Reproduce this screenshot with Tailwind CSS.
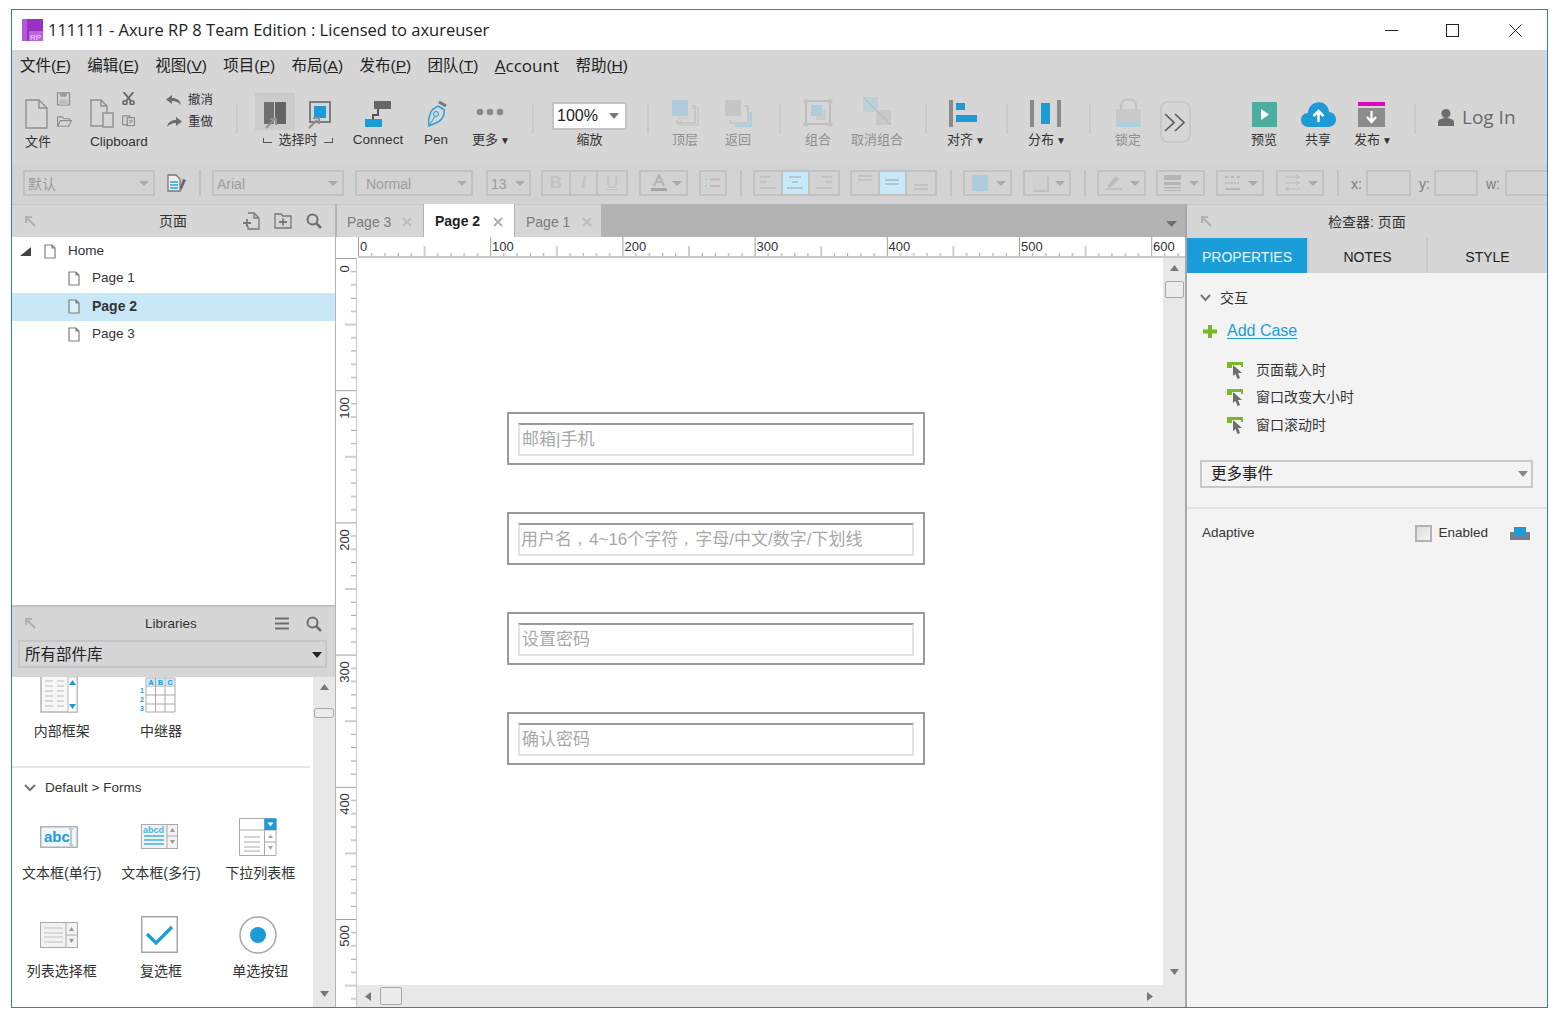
<!DOCTYPE html>
<html lang="en">
<head>
    <meta charset="UTF-8">
    <title>111111 - Axure RP 8 Team Edition</title>
    <script src="https://cdn.jsdelivr.net/npm/@tailwindcss/browser@4"></script>
</head>
<body class="bg-white overflow-hidden font-['Liberation_Sans','Noto_Sans_CJK_SC',sans-serif] text-[#333]">
<div class="ml-[11px] mt-[9px] w-[1537px] h-[999px] border border-[#2b7cd3] flex flex-col">

    <!-- title bar -->
    <div class="h-[40px] flex items-center bg-white shrink-0">
        <svg class="ml-[10px]" width="21" height="22" viewBox="0 0 21 22"><rect width="21" height="22" fill="#9b30c4"/><rect x="0" y="0" width="5" height="22" fill="#b45ad6"/><rect x="7" y="12" width="14" height="10" fill="#b866d8"/><text x="8" y="20.5" font-size="8" fill="#f0d8f8" font-family="Liberation Sans">RP</text></svg>
        <span class="ml-[5px] font-['Open_Sans',sans-serif] text-[16.5px] text-[#222] whitespace-nowrap">111111 - Axure RP 8 Team Edition : Licensed to axureuser</span>
        <div class="ml-auto flex items-center">
            <svg width="13" height="13" viewBox="0 0 13 13"><path d="M0 6.5H13" stroke="#222" stroke-width="1"/></svg>
            <svg class="ml-[48px]" width="14" height="13" viewBox="0 0 14 13"><rect x="0.5" y="0.5" width="12" height="12" fill="none" stroke="#222"/></svg>
            <svg class="ml-[49px] mr-[25px]" width="13" height="13" viewBox="0 0 13 13"><path d="M0.5 0.5L12.5 12.5M12.5 0.5L0.5 12.5" stroke="#222"/></svg>
        </div>
    </div>

    <!-- menu -->
    <div class="h-[32px] bg-[#d6d6d6] flex items-center pl-[8px] pb-px gap-[16.4px] text-[15.5px] text-[#222] shrink-0">
        <span>文件(<u>F</u>)</span><span>编辑(<u>E</u>)</span><span>视图(<u>V</u>)</span><span>项目(<u>P</u>)</span><span>布局(<u>A</u>)</span><span>发布(<u>P</u>)</span><span>团队(<u>T</u>)</span><span class="font-['Open_Sans',sans-serif] text-[17px]"><u>A</u>ccount</span><span>帮助(<u>H</u>)</span>
    </div>

    <!-- toolbar -->
    <div class="h-[82px] bg-[#d6d6d6] flex pt-[8px] text-[13px] text-[#333] shrink-0">
        <div class="ml-[13px] w-[50px] flex flex-col">
            <div class="h-[37px] flex">
                <svg class="mt-[9px]" width="23" height="30" viewBox="0 0 23 30"><path d="M1 1H14L22 9V29H1ZM14 1V9H22" fill="none" stroke="#8f8f8f" stroke-width="1.4"/></svg>
                <div class="ml-[8px] flex flex-col gap-[10px]">
                    <svg class="mt-[2px]" width="15" height="15" viewBox="0 0 15 15"><path d="M1 1H14V14H1Z" fill="none" stroke="#8c8c8c" stroke-width="1.3"/><rect x="4" y="1" width="7" height="4" fill="#9a9a9a"/><rect x="3" y="8" width="9" height="6" fill="#bdbdbd"/></svg>
                    <svg width="17" height="12" viewBox="0 0 17 12"><path d="M1 11V1H6L8 3H14V5M1 11L4 5H16L13 11Z" fill="none" stroke="#8c8c8c" stroke-width="1.2"/></svg>
                </div>
            </div>
            <span class="mt-[7px] h-4 leading-4">文件</span>
        </div>
        <div class="ml-[15px] w-[60px] flex flex-col">
            <div class="h-[37px] flex">
                <svg class="mt-[9px]" width="24" height="30" viewBox="0 0 24 30"><path d="M13 27H1V1H11L17 7V14M11 1V7H17" fill="none" stroke="#8f8f8f" stroke-width="1.4"/><rect x="13" y="14" width="10" height="14" fill="none" stroke="#8f8f8f" stroke-width="1.4"/></svg>
                <div class="ml-[7px] flex flex-col gap-[10px]">
                    <svg class="mt-[2px]" width="15" height="15" viewBox="0 0 15 15"><path d="M2 0L10 10M13 0L5 10" stroke="#666" stroke-width="2"/><circle cx="3.5" cy="12" r="2.2" fill="none" stroke="#666" stroke-width="1.8"/><circle cx="11.5" cy="12" r="2.2" fill="none" stroke="#666" stroke-width="1.8"/></svg>
                    <svg width="16" height="13" viewBox="0 0 16 13"><rect x="1" y="1" width="8" height="10" fill="none" stroke="#777"/><rect x="6" y="3" width="8" height="9" fill="#d6d6d6" stroke="#777"/><path d="M8 6H12M8 8H12" stroke="#888"/></svg>
                </div>
            </div>
            <span class="mt-[7px] h-4 leading-4 text-[13.5px]">Clipboard</span>
        </div>
        <div class="ml-[16px] w-[50px] flex flex-col gap-[6px] text-[12.5px] pt-[2px]">
            <div class="flex items-center h-[16px]"><svg width="16" height="12" viewBox="0 0 16 12"><path d="M6 1L0 5.5L6 10V7C10 7 12 8 15 11C14 6 11 4 6 4Z" fill="#6d6d6d"/></svg><span class="ml-[6px] whitespace-nowrap">撤消</span></div>
            <div class="flex items-center h-[16px]"><svg width="16" height="12" viewBox="0 0 16 12"><path d="M10 1L16 5.5L10 10V7C6 7 4 8 1 11C2 6 5 4 10 4Z" fill="#6d6d6d"/></svg><span class="ml-[6px] whitespace-nowrap">重做</span></div>
        </div>
        <div class="ml-[20px] mt-[14px] w-[2px] h-[30px] bg-[#cacaca]"></div>

        <div class="ml-[17px] w-[86px] flex flex-col items-center">
            <div class="h-[37px] mt-[3px] w-full flex items-start">
                <div class="w-[40px] h-[37px] bg-[#cbcbcb] flex items-start justify-center pt-[8px]">
                    <svg width="23" height="28" viewBox="0 0 23 28"><rect x="0" y="1" width="10" height="22" fill="#6f6f6f"/><rect x="11" y="1" width="11" height="22" fill="#646464"/><path d="M2 27L10 19M6 18H12V24" fill="none" stroke="#8f8f8f" stroke-width="2"/></svg>
                </div>
                <svg class="ml-[13px] mt-[8px]" width="24" height="28" viewBox="0 0 24 28"><rect x="2" y="1" width="20" height="20" fill="none" stroke="#7d7d7d" stroke-width="2"/><rect x="6" y="5" width="12" height="12" fill="#1d9bd7"/><path d="M1 27L9 19M5 17H11V23" fill="none" stroke="#8f8f8f" stroke-width="2"/></svg>
            </div>
            <span class="mt-[2px] h-4 leading-4 whitespace-nowrap flex items-center text-[13px]"><i class="w-[9px] h-[5px] border-l border-b border-[#555] mr-[6px]"></i>选择时<i class="w-[9px] h-[5px] border-r border-b border-[#555] ml-[6px]"></i></span>
        </div>
        <div class="ml-[7px] w-[60px] flex flex-col items-center">
            <div class="h-[37px] flex items-end">
                <svg width="27" height="26" viewBox="0 0 27 26"><rect x="9" y="0" width="17" height="8" fill="#666"/><path d="M13 8V14H8V18" fill="none" stroke="#555" stroke-width="2"/><rect x="0" y="18" width="17" height="8" fill="#1d9bd7"/></svg>
            </div>
            <span class="mt-[5px] h-4 leading-4 text-[13.5px]">Connect</span>
        </div>
        <div class="ml-[12px] w-[32px] flex flex-col items-center">
            <div class="h-[37px] flex items-end">
                <svg width="23" height="27" viewBox="0 0 23 27"><path d="M14 2L21 6" stroke="#777" stroke-width="3"/><path d="M13 6L19 9.5C20 15 17 20 13 22L4 26C3 21 4 13 8 9Z" fill="none" stroke="#2aa0d8" stroke-width="1.5"/><path d="M4 26L10 16" stroke="#2aa0d8"/><circle cx="11" cy="14" r="2.5" fill="none" stroke="#2aa0d8"/></svg>
            </div>
            <span class="mt-[5px] h-4 leading-4 text-[13.5px]">Pen</span>
        </div>
        <div class="ml-[14px] w-[50px] flex flex-col items-center">
            <div class="h-[37px] flex items-center">
                <svg class="mt-[7px] -ml-[3px]" width="28" height="8" viewBox="0 0 28 8"><circle cx="4" cy="4" r="3.3" fill="#8a8a8a"/><circle cx="14" cy="4" r="3.3" fill="#8a8a8a"/><circle cx="24" cy="4" r="3.3" fill="#8a8a8a"/></svg>
            </div>
            <span class="mt-[5px] h-4 leading-4 whitespace-nowrap">更多<span class="text-[10px] ml-[2px]">▼</span></span>
        </div>
        <div class="ml-[16px] mt-[14px] w-[2px] h-[30px] bg-[#cacaca]"></div>

        <div class="ml-[18px] w-[75px] flex flex-col items-center">
            <div class="h-[42px] w-full pt-[12px]">
                <div class="h-[28px] bg-white border-2 border-[#c4c4c4] flex items-center pl-[3px] text-[16px] text-[#222]">100%<svg class="ml-auto mr-[6px]" width="10" height="6" viewBox="0 0 10 6"><path d="M0 0H10L5 6Z" fill="#777"/></svg></div>
            </div>
            <span class="h-4 leading-4">缩放</span>
        </div>
        <div class="ml-[20px] mt-[14px] w-[2px] h-[30px] bg-[#cacaca]"></div>
        <div class="text-[#8f8f8f] flex">
            <div class="ml-[16px] w-[40px] flex flex-col items-center">
                <div class="h-[37px] flex items-end"><svg width="27" height="27" viewBox="0 0 27 27"><path d="M17 18H8V25H26V8H20" fill="none" stroke="#cbcbcb" stroke-width="2"/><path d="M20 6H23V23H5V20" fill="none" stroke="#c6c6c6" stroke-width="2"/><rect x="0" y="0" width="16" height="16" fill="#aeccdc"/></svg></div>
                <span class="mt-[5px] h-4 leading-4">顶层</span>
            </div>
            <div class="ml-[13px] w-[40px] flex flex-col items-center">
                <div class="h-[37px] flex items-end"><svg width="27" height="27" viewBox="0 0 27 27"><rect x="0" y="0" width="16" height="16" fill="#c6c6c6"/><path d="M20 6H23V23H5V20" fill="none" stroke="#c6c6c6" stroke-width="2"/><path d="M26 12V26H10" fill="none" stroke="#a9cde0" stroke-width="3"/></svg></div>
                <span class="mt-[5px] h-4 leading-4">返回</span>
            </div>
        </div>
        <div class="ml-[21px] mt-[14px] w-[2px] h-[30px] bg-[#cacaca]"></div>
        <div class="text-[#8f8f8f] flex">
            <div class="ml-[17px] w-[40px] flex flex-col items-center">
                <div class="h-[37px] flex items-end"><svg width="30" height="29" viewBox="0 0 30 29"><rect x="3" y="3" width="24" height="23" fill="none" stroke="#bdbdbd" stroke-width="2"/><g fill="#c2c2c2"><circle cx="3" cy="3" r="2.6"/><circle cx="27" cy="3" r="2.6"/><circle cx="3" cy="26" r="2.6"/><circle cx="27" cy="26" r="2.6"/></g><rect x="13" y="12" width="10" height="10" fill="#cbcbcb"/><rect x="8" y="7" width="11" height="11" fill="#aeccdc"/></svg></div>
                <span class="mt-[5px] h-4 leading-4">组合</span>
            </div>
            <div class="ml-[11px] w-[56px] flex flex-col items-center">
                <div class="h-[37px] flex items-end"><svg width="30" height="30" viewBox="0 0 30 30"><rect x="1" y="0" width="15" height="15" fill="#bcd0da"/><rect x="14" y="13" width="15" height="15" fill="#c8c8c8"/><path d="M1 0L29 28" stroke="#b8b8b8"/></svg></div>
                <span class="mt-[5px] h-4 leading-4 whitespace-nowrap">取消组合</span>
            </div>
        </div>
        <div class="ml-[20px] mt-[14px] w-[2px] h-[30px] bg-[#cacaca]"></div>
        <div class="ml-[14px] w-[50px] flex flex-col items-center">
            <div class="h-[37px] flex items-end -ml-[6px]"><svg width="28" height="27" viewBox="0 0 28 27"><rect x="0" y="0" width="4" height="27" fill="#8a8a8a"/><rect x="7" y="3" width="9" height="7" fill="#1d9bd7"/><rect x="7" y="15" width="21" height="7" fill="#1d9bd7"/></svg></div>
            <span class="mt-[5px] h-4 leading-4 whitespace-nowrap">对齐<span class="text-[10px] ml-[2px]">▼</span></span>
        </div>
        <div class="ml-[15px] mt-[14px] w-[2px] h-[30px] bg-[#cacaca]"></div>
        <div class="ml-[14px] w-[50px] flex flex-col items-center">
            <div class="h-[37px] flex items-end -ml-[4px]"><svg width="31" height="27" viewBox="0 0 31 27"><rect x="0" y="0" width="4" height="27" fill="#8a8a8a"/><rect x="11" y="3" width="9" height="21" fill="#1d9bd7"/><rect x="27" y="0" width="4" height="27" fill="#8a8a8a"/></svg></div>
            <span class="mt-[5px] h-4 leading-4 whitespace-nowrap">分布<span class="text-[10px] ml-[2px]">▼</span></span>
        </div>
        <div class="ml-[17px] mt-[14px] w-[2px] h-[30px] bg-[#cacaca]"></div>
        <div class="ml-[17px] w-[40px] flex flex-col items-center text-[#8f8f8f]">
            <div class="h-[37px] flex items-end"><svg width="25" height="29" viewBox="0 0 25 29"><path d="M5 11V8C5 -1 20 -1 20 8V11" fill="none" stroke="#c4c4c4" stroke-width="2.5"/><rect x="0" y="11" width="25" height="13" fill="#c9c9c9"/><rect x="0" y="24" width="25" height="5" fill="#aecfe1"/></svg></div>
            <span class="mt-[5px] h-4 leading-4">锁定</span>
        </div>
        <div class="ml-[12px] mt-[11px] w-[31px] h-[42px] border-2 border-[#c8c8c8] rounded-[8px] flex items-center justify-center">
            <svg width="23" height="19" viewBox="0 0 23 19"><path d="M1 1L10 9.5L1 18M11 1L20 9.5L11 18" fill="none" stroke="#5c5c5c" stroke-width="1.7"/></svg>
        </div>
        <div class="ml-[53px] w-[40px] flex flex-col items-center">
            <div class="h-[37px] flex items-end"><svg width="25" height="25" viewBox="0 0 25 25"><rect width="25" height="25" fill="#4dae9f"/><path d="M9 7L17 12.5L9 18Z" fill="#fff"/></svg></div>
            <span class="mt-[5px] h-4 leading-4">预览</span>
        </div>
        <div class="ml-[14px] w-[40px] flex flex-col items-center">
            <div class="h-[37px] flex items-end"><svg width="35" height="25" viewBox="0 0 35 25"><path d="M8 25C-3 25 -2 11 7 11C8 -3 27 -3 28 10C37 10 38 25 27 25Z" fill="#1d9bd7"/><path d="M17.500 20V10M12.500 14L17.500 9L22.500 14" fill="none" stroke="#fff" stroke-width="2.500"/></svg></div>
            <span class="mt-[5px] h-4 leading-4">共享</span>
        </div>
        <div class="ml-[10px] w-[50px] flex flex-col items-center">
            <div class="h-[37px] flex items-end -ml-[3px]"><svg width="27" height="25" viewBox="0 0 27 25"><rect width="27" height="4" fill="#d905c0"/><rect y="6" width="27" height="19" fill="#8c8c8c"/><path d="M13.500 9V19M9 15L13.500 20L18 15" fill="none" stroke="#fff" stroke-width="2.200"/></svg></div>
            <span class="mt-[5px] h-4 leading-4 whitespace-nowrap">发布<span class="text-[10px] ml-[2px]">▼</span></span>
        </div>
        <div class="ml-[16px] mt-[14px] w-[2px] h-[30px] bg-[#cacaca]"></div>
        <div class="ml-[22px] flex items-center h-[54px] self-start">
            <svg width="16" height="17" viewBox="0 0 16 17"><circle cx="8" cy="4.500" r="4.500" fill="#6d6d6d"/><path d="M0 17V13C0 10 5 9 8 9C11 9 16 10 16 13V17Z" fill="#6d6d6d"/></svg>
            <span class="ml-[8px] text-[19px] text-[#6a6a6a] font-['Open_Sans',sans-serif]">Log In</span>
        </div>
    </div>

    <!-- format bar -->
    <div class="h-[40px] bg-[#d3d3d3] flex pt-[6px] text-[14px] leading-[24px] text-[#9c9c9c] shrink-0">
        <div class="ml-[11px] w-[132px] h-[26px] border-2 border-[#c2c2c2] flex items-center pl-[3px] pt-px">默认<svg class="ml-auto mr-[4px]" width="10" height="5" viewBox="0 0 10 5"><path d="M0 0H10L5 5Z" fill="#aaa"/></svg></div>
        <svg class="ml-[12px] mt-[4px]" width="20" height="18" viewBox="0 0 20 18"><path d="M1 1H9L13 5V17H1Z" fill="#eee" stroke="#777" stroke-width="1.300"/><path d="M3 8H11M3 11H11M3 14H11" stroke="#2aa0d8" stroke-width="1.500"/><path d="M14 17L19 6L16 5L13 13Z" fill="#666"/></svg>
        <div class="ml-[12px] w-[2px] h-[26px] bg-[#c2c2c2]"></div>
        <div class="ml-[11px] w-[132px] h-[26px] border-2 border-[#c2c2c2] flex items-center pl-[3px] pt-px">Arial<svg class="ml-auto mr-[4px]" width="10" height="5" viewBox="0 0 10 5"><path d="M0 0H10L5 5Z" fill="#aaa"/></svg></div>
        <div class="ml-[11px] w-[118px] h-[26px] border-2 border-[#c2c2c2] flex items-center pl-[9px] pt-px">Normal<svg class="ml-auto mr-[4px]" width="10" height="5" viewBox="0 0 10 5"><path d="M0 0H10L5 5Z" fill="#aaa"/></svg></div>
        <div class="ml-[13px] w-[45px] h-[26px] border-2 border-[#c2c2c2] flex items-center pl-[3px] pt-px">13<svg class="ml-auto mr-[4px]" width="10" height="5" viewBox="0 0 10 5"><path d="M0 0H10L5 5Z" fill="#aaa"/></svg></div>
        <div class="ml-[10px] w-[87px] h-[26px] border-2 border-[#c2c2c2] grid grid-cols-3 divide-x-2 divide-[#c2c2c2] text-center text-[17px] leading-[22px] text-[#c2c2c2]"><b>B</b><i class="font-bold">I</i><u>U</u></div>
        <div class="ml-[11px] w-[49px] h-[26px] border-2 border-[#c2c2c2] flex items-center pl-[9px]">
            <svg width="18" height="18" viewBox="0 0 18 18"><path d="M4 12L9 1L14 12M6 8H12" fill="none" stroke="#b5b5b5" stroke-width="2"/><rect x="1" y="14" width="16" height="3" fill="#a6a6a6"/></svg>
            <svg class="ml-auto mr-[4px]" width="10" height="5" viewBox="0 0 10 5"><path d="M0 0H10L5 5Z" fill="#aaa"/></svg>
        </div>
        <div class="ml-[11px] w-[28px] h-[26px] border-2 border-[#c2c2c2] flex items-center justify-center"><svg width="16" height="10" viewBox="0 0 16 10"><path d="M0 1.500H2M0 8H2" stroke="#9fcde4" stroke-width="2"/><path d="M5 1.500H15M5 8H15" stroke="#bdbdbd" stroke-width="2"/></svg></div>
        <div class="ml-[13px] w-[2px] h-[26px] bg-[#c2c2c2]"></div>
        <div class="ml-[11px] w-[87px] h-[26px] border-2 border-[#c2c2c2] grid grid-cols-3 divide-x-2 divide-[#c2c2c2]">
            <div class="flex items-center justify-center"><svg width="16" height="14" viewBox="0 0 16 14"><path d="M0 1H11M0 6H7M0 12H16" stroke="#bdbdbd" stroke-width="1.500"/></svg></div>
            <div class="flex items-center justify-center bg-[#c8e9f9]"><svg width="16" height="14" viewBox="0 0 16 14"><path d="M2 1H14M5 6H11M0 12H16" stroke="#a9bcc6" stroke-width="1.500"/></svg></div>
            <div class="flex items-center justify-center"><svg width="16" height="14" viewBox="0 0 16 14"><path d="M5 1H16M9 6H16M0 12H16" stroke="#bdbdbd" stroke-width="1.500"/></svg></div>
        </div>
        <div class="ml-[10px] w-[87px] h-[26px] border-2 border-[#c2c2c2] grid grid-cols-3 divide-x-2 divide-[#c2c2c2]">
            <div class="flex items-start justify-center pt-[3px]"><svg width="16" height="8" viewBox="0 0 16 8"><path d="M1 1H15M1 5H15" stroke="#bdbdbd" stroke-width="1.500"/></svg></div>
            <div class="flex items-center justify-center bg-[#c8e9f9]"><svg width="16" height="8" viewBox="0 0 16 8"><path d="M1 1H15M1 5H15" stroke="#a9bcc6" stroke-width="1.500"/></svg></div>
            <div class="flex items-end justify-center pb-[3px]"><svg width="16" height="8" viewBox="0 0 16 8"><path d="M1 2H15M1 6H15" stroke="#bdbdbd" stroke-width="1.500"/></svg></div>
        </div>
        <div class="ml-[13px] w-[2px] h-[26px] bg-[#c2c2c2]"></div>
        <div class="ml-[11px] w-[49px] h-[26px] border-2 border-[#c2c2c2] flex items-center pl-[7px]"><div class="w-[16px] h-[16px] bg-[#aeccdc]"></div><svg class="ml-auto mr-[4px]" width="10" height="5" viewBox="0 0 10 5"><path d="M0 0H10L5 5Z" fill="#aaa"/></svg></div>
        <div class="ml-[11px] w-[48px] h-[26px] border-2 border-[#c2c2c2] flex items-center pl-[8px]"><div class="w-[14px] h-[14px] bg-[#d0d0d0] shadow-[1px_1px_0_1px_#c0c0c0]"></div><svg class="ml-auto mr-[4px]" width="10" height="5" viewBox="0 0 10 5"><path d="M0 0H10L5 5Z" fill="#aaa"/></svg></div>
        <div class="ml-[13px] w-[2px] h-[26px] bg-[#c2c2c2]"></div>
        <div class="ml-[11px] w-[49px] h-[26px] border-2 border-[#c2c2c2] flex items-center pl-[6px]"><svg width="17" height="16" viewBox="0 0 17 16"><path d="M2 11L11 1L14 4L5 13Z" fill="#bcbcbc"/><rect x="0" y="13" width="17" height="2" fill="#c0c0c0"/></svg><svg class="ml-auto mr-[4px]" width="10" height="5" viewBox="0 0 10 5"><path d="M0 0H10L5 5Z" fill="#aaa"/></svg></div>
        <div class="ml-[10px] w-[49px] h-[26px] border-2 border-[#c2c2c2] flex items-center pl-[6px]"><svg width="17" height="16" viewBox="0 0 17 16"><rect width="17" height="5" fill="#b5b5b5"/><rect y="7" width="17" height="3" fill="#b5b5b5"/><rect y="12" width="17" height="1.500" fill="#b5b5b5"/><rect y="15" width="17" height="1" fill="#b5b5b5"/></svg><svg class="ml-auto mr-[4px]" width="10" height="5" viewBox="0 0 10 5"><path d="M0 0H10L5 5Z" fill="#aaa"/></svg></div>
        <div class="ml-[11px] w-[48px] h-[26px] border-2 border-[#c2c2c2] flex items-center pl-[6px]"><svg width="17" height="16" viewBox="0 0 17 16"><path d="M1 2H16" stroke="#b8b8b8" stroke-width="2" stroke-dasharray="3 3"/><path d="M1 8H16" stroke="#b8b8b8" stroke-width="1.500" stroke-dasharray="2 1"/><path d="M1 14H16" stroke="#b8b8b8" stroke-width="2"/></svg><svg class="ml-auto mr-[4px]" width="10" height="5" viewBox="0 0 10 5"><path d="M0 0H10L5 5Z" fill="#aaa"/></svg></div>
        <div class="ml-[12px] w-[48px] h-[26px] border-2 border-[#c2c2c2] flex items-center pl-[6px]"><svg width="17" height="16" viewBox="0 0 17 16"><path d="M1 2H16M1 8H16M1 14H16" stroke="#bcbcbc"/><path d="M12 0L15 2L12 4M12 6L15 8L12 10M5 12L2 14L5 16" fill="none" stroke="#bcbcbc"/></svg><svg class="ml-auto mr-[4px]" width="10" height="5" viewBox="0 0 10 5"><path d="M0 0H10L5 5Z" fill="#aaa"/></svg></div>
        <div class="ml-[13px] w-[2px] h-[26px] bg-[#c2c2c2]"></div>
        <span class="ml-[12px] w-[15px] leading-[28px] text-[#7d7d7d]">x:</span>
        <div class="w-[45px] h-[26px] border-2 border-[#c2c2c2]"></div>
        <span class="ml-[8px] w-[15px] leading-[28px] text-[#7d7d7d]">y:</span>
        <div class="w-[44px] h-[26px] border-2 border-[#c2c2c2]"></div>
        <span class="ml-[8px] w-[19px] leading-[28px] text-[#7d7d7d]">w:</span>
        <div class="flex-1 h-[26px] border-2 border-r-0 border-[#c2c2c2]"></div>
    </div>

    <!-- main -->
    <div class="flex-1 flex min-h-0">

        <!-- left column -->
        <div class="w-[324px] flex flex-col border-r border-[#b5b5b5] shrink-0">
            <div class="h-[33px] bg-[#d6d6d6] border-t border-[#c6c6c6] flex items-center text-[14px] relative shrink-0">
                <svg class="ml-[13px]" width="11" height="11" viewBox="0 0 11 11"><path d="M10 10L2 2M1 7V1H7" fill="none" stroke="#b0b0b0" stroke-width="2.200"/></svg>
                <span class="ml-[123px] pt-px">页面</span>
                <svg class="ml-auto" width="17" height="18" viewBox="0 0 17 18"><path d="M5 1H11L16 6V17H5V14M11 1V6H16" fill="none" stroke="#777" stroke-width="1.300"/><path d="M0 11H8M4 7V15" stroke="#777" stroke-width="1.800"/></svg>
                <svg class="ml-[14px]" width="18" height="16" viewBox="0 0 18 16"><path d="M1 1H7L9 3H17V15H1Z" fill="none" stroke="#777" stroke-width="1.300"/><path d="M5 9H13M9 5.500V12.500" stroke="#777" stroke-width="1.800"/></svg>
                <svg class="ml-[14px] mr-[13px]" width="16" height="16" viewBox="0 0 16 16"><circle cx="6.500" cy="6.500" r="5" fill="none" stroke="#6e6e6e" stroke-width="2"/><path d="M10 10L15 15" stroke="#6e6e6e" stroke-width="2.500"/></svg>
            </div>
            <div class="h-[368px] bg-white text-[13.5px] shrink-0">
                <div class="h-[28px] flex items-center"><svg class="ml-[8px]" width="11" height="9" viewBox="0 0 11 9"><path d="M11 0V9H0Z" fill="#444"/></svg><svg class="ml-[13px]" width="12" height="15" viewBox="0 0 12 15"><path d="M1 1H8L11 4V14H1Z M8 1V4H11" fill="none" stroke="#7f7f7f" stroke-width="1.200"/></svg><span class="ml-[12px]">Home</span></div>
                <div class="h-[28px] flex items-center pl-[56px]"><svg class="mb-[2px]" width="12" height="15" viewBox="0 0 12 15"><path d="M1 1H8L11 4V14H1Z M8 1V4H11" fill="none" stroke="#7f7f7f" stroke-width="1.200"/></svg><span class="ml-[12px] mb-[2px]">Page 1</span></div>
                <div class="h-[28px] flex items-center pl-[56px] bg-[#c9e8f7]"><svg class="mb-[2px]" width="12" height="15" viewBox="0 0 12 15"><path d="M1 1H8L11 4V14H1Z M8 1V4H11" fill="#fff" fill-opacity="0.300" stroke="#7f7f7f" stroke-width="1.200"/></svg><span class="ml-[12px] mb-[2px] font-bold text-[14px]">Page 2</span></div>
                <div class="h-[28px] flex items-center pl-[56px]"><svg class="mb-[2px]" width="12" height="15" viewBox="0 0 12 15"><path d="M1 1H8L11 4V14H1Z M8 1V4H11" fill="none" stroke="#7f7f7f" stroke-width="1.200"/></svg><span class="ml-[12px] mb-[2px]">Page 3</span></div>
            </div>
            <div class="h-[72px] bg-[#d6d6d6] border-t-2 border-[#c2c2c2] shrink-0">
                <div class="h-[33px] flex items-center text-[13.5px]">
                    <svg class="ml-[13px]" width="11" height="11" viewBox="0 0 11 11"><path d="M10 10L2 2M1 7V1H7" fill="none" stroke="#b0b0b0" stroke-width="2.200"/></svg>
                    <span class="ml-[109px] pt-px">Libraries</span>
                    <svg class="ml-auto" width="14" height="13" viewBox="0 0 14 13"><path d="M0 1.500H14M0 6.500H14M0 11.500H14" stroke="#6e6e6e" stroke-width="2"/></svg>
                    <svg class="ml-[17px] mr-[13px]" width="16" height="16" viewBox="0 0 16 16"><circle cx="6.500" cy="6.500" r="5" fill="none" stroke="#6e6e6e" stroke-width="2"/><path d="M10 10L15 15" stroke="#6e6e6e" stroke-width="2.500"/></svg>
                </div>
                <div class="ml-[6px] w-[309px] h-[28px] border-2 border-[#c6c6c6] flex items-center pl-[5px] pt-px text-[15.500px] text-[#222]">所有部件库<svg class="ml-auto mr-[3px]" width="10" height="6" viewBox="0 0 10 6"><path d="M0 0H10L5 6Z" fill="#222"/></svg></div>
            </div>
            <div class="flex-1 flex bg-white min-h-0">
                <div class="w-[301px] text-[14px] overflow-hidden">
                    <div class="h-[91px] border-b-2 border-[#e6e6e6] grid grid-cols-3 w-[298px] content-start">
                        <div class="flex flex-col items-center">
                            <div class="h-[46px] mr-[5px]"><svg width="38" height="36" viewBox="0 0 38 36"><path d="M1 0V35H37V0" fill="#f7f7f7" stroke="#b5b5b5" stroke-width="1.500"/><path d="M5 4H13M17 4H24M5 9H13M17 9H24M5 14H13M17 14H24M5 19H13M17 19H24M5 24H13M17 24H24M5 29H13M17 29H24" stroke="#cfcfcf" stroke-width="1.500"/><rect x="28" y="0" width="9" height="35" fill="#fff" stroke="#b5b5b5"/><path d="M29 8H36L32.500 3ZM29 27H36L32.500 32Z" fill="#1d9bd7"/></svg></div>
                            <span class="h-4 leading-4">内部框架</span>
                        </div>
                        <div class="flex flex-col items-center">
                            <div class="h-[46px] mr-[5px]"><svg width="36" height="36" viewBox="0 0 36 36" font-family="Liberation Sans" font-size="7" font-weight="700" fill="#1d9bd7"><path d="M6 1H35V35H6ZM6 9H35M6 18H35M6 27H35M15.500 1V35M25 1V35" fill="none" stroke="#a9a9a9"/><rect x="7" y="2" width="8" height="6.500" fill="#c4e7f7"/><rect x="16" y="2" width="8.500" height="6.500" fill="#c4e7f7"/><rect x="26" y="2" width="8" height="6.500" fill="#c4e7f7"/><text x="8.500" y="7.500">A</text><text x="18" y="7.500">B</text><text x="27.500" y="7.500">C</text><text x="0" y="15.500">1</text><text x="0" y="25">2</text><text x="0" y="34">3</text></svg></div>
                            <span class="h-4 leading-4">中继器</span>
                        </div>
                    </div>
                    <div class="h-[40px] flex items-center">
                        <svg class="ml-[12px]" width="12" height="8" viewBox="0 0 12 8"><path d="M1 1L6 6L11 1" fill="none" stroke="#777" stroke-width="2"/></svg>
                        <span class="ml-[9px] text-[13.5px]">Default &gt; Forms</span>
                    </div>
                    <div class="grid grid-cols-3 w-[298px]">
                        <div class="flex flex-col items-center">
                            <div class="h-[57px] flex items-center mr-[5px]"><svg width="38" height="22" viewBox="0 0 38 22"><rect x="0.750" y="0.750" width="36.500" height="20.500" fill="#edf7fc" stroke="#b0b0b0" stroke-width="1.500"/><text x="4" y="16" font-size="15" font-weight="700" fill="#1d9bd7" font-family="Liberation Sans">abc</text><path d="M31 4V18M29 3H33M29 19H33" stroke="#9a9a9a"/></svg></div>
                            <span class="h-4 leading-4 whitespace-nowrap">文本框(单行)</span>
                        </div>
                        <div class="flex flex-col items-center">
                            <div class="h-[57px] flex items-center mr-[2px]"><svg width="38" height="26" viewBox="0 0 38 26"><rect x="0.500" y="0.500" width="36" height="24" fill="#f2f2f2" stroke="#aaa"/><text x="2" y="9" font-size="9" font-weight="700" fill="#4db5e4" font-family="Liberation Sans">abcd</text><path d="M3 12H23M3 16H23M3 20H23" stroke="#45b0e2" stroke-width="1.300"/><path d="M26 1V24M26 12H37" stroke="#aaa"/><path d="M29 8H34L31.500 4ZM29 16H34L31.500 20Z" fill="#999"/></svg></div>
                            <span class="h-4 leading-4 whitespace-nowrap">文本框(多行)</span>
                        </div>
                        <div class="flex flex-col items-center">
                            <div class="h-[57px] flex items-center mr-[5px]"><svg width="38" height="38" viewBox="0 0 38 38"><path d="M0.500 0.500H37V37.500H0.500ZM0.500 12H37M25.500 0.500V37.500" fill="none" stroke="#aaa"/><rect x="25.500" y="0.500" width="12" height="11.500" fill="#1d9bd7"/><path d="M28.500 4.500H34.500L31.500 8.500Z" fill="#fff"/><path d="M5 19H21M5 24H21M5 29H21M5 33H21" stroke="#a9a9a9" stroke-width="1.200"/><path d="M25.500 24H37" stroke="#aaa"/><path d="M29 20H34L31.500 16.500ZM29 28H34L31.500 32Z" fill="#aaa"/></svg></div>
                            <span class="h-4 leading-4 whitespace-nowrap">下拉列表框</span>
                        </div>
                    </div>
                    <div class="grid grid-cols-3 mt-[20px] w-[298px]">
                        <div class="flex flex-col items-center">
                            <div class="h-[62px] pt-[5px] flex items-center mr-[5px]"><svg width="38" height="26" viewBox="0 0 38 26"><rect x="0.500" y="0.500" width="37" height="25" fill="#f2f2f2" stroke="#aaa"/><path d="M4 6H23M4 11H23M4 15H23M4 20H23" stroke="#c2c2c2" stroke-width="1.200"/><path d="M26 1V25M26 13H37" stroke="#aaa"/><path d="M29 9H34L31.500 5ZM29 17H34L31.500 21Z" fill="#999"/></svg></div>
                            <span class="h-4 leading-4 whitespace-nowrap">列表选择框</span>
                        </div>
                        <div class="flex flex-col items-center">
                            <div class="h-[62px] pt-[5px] flex items-center mr-[2px]"><svg width="37" height="37" viewBox="0 0 37 37"><rect x="0.750" y="0.750" width="35.500" height="35.500" fill="#fff" stroke="#a6a6a6" stroke-width="1.500"/><path d="M6 18L15 27L31 11" fill="none" stroke="#1d9bd7" stroke-width="3.200"/></svg></div>
                            <span class="h-4 leading-4 whitespace-nowrap">复选框</span>
                        </div>
                        <div class="flex flex-col items-center">
                            <div class="h-[62px] pt-[5px] flex items-center mr-[5px]"><svg width="38" height="38" viewBox="0 0 38 38"><circle cx="19" cy="19" r="18" fill="#fff" stroke="#a6a6a6" stroke-width="1.500"/><circle cx="19" cy="19" r="8" fill="#1d9bd7"/></svg></div>
                            <span class="h-4 leading-4 whitespace-nowrap">单选按钮</span>
                        </div>
                    </div>
                </div>
                <!-- library scrollbar -->
                <div class="flex-1 bg-[#e8e8e8] flex flex-col items-center">
                    <svg class="mt-[7px]" width="9" height="6" viewBox="0 0 9 6"><path d="M0 6H9L4.500 0Z" fill="#777"/></svg>
                    <div class="mt-[18px] w-[20px] h-[10px] rounded-[3px] border border-[#a6a6a6] bg-[#ececec]"></div>
                    <svg class="mt-auto mb-[10px]" width="9" height="6" viewBox="0 0 9 6"><path d="M0 0H9L4.500 6Z" fill="#777"/></svg>
                </div>
            </div>
        </div>

        <!-- center column -->
        <div class="w-[851px] flex flex-col border-r-2 border-[#a8a8a8] shrink-0">
            <div class="h-[33px] bg-[#b3b3b3] flex text-[14px] shrink-0">
                <div class="ml-px w-[86px] bg-[#d6d6d6] border-t border-[#c6c6c6] flex items-center pl-[10px] pt-[2px] text-[#7a7a7a]">Page 3<svg class="ml-[11px]" width="10" height="10" viewBox="0 0 10 10"><path d="M1 1L9 9M9 1L1 9" stroke="#bdbdbd" stroke-width="2"/></svg></div>
                <div class="ml-px w-[90px] bg-white flex items-center pl-[11px] pt-[2px] font-bold text-[#222]">Page 2<svg class="ml-[13px]" width="10" height="10" viewBox="0 0 10 10"><path d="M1 1L9 9M9 1L1 9" stroke="#b0b0b0" stroke-width="2"/></svg></div>
                <div class="ml-px w-[86px] bg-[#d6d6d6] border-t border-[#c6c6c6] flex items-center pl-[11px] pt-[2px] text-[#7a7a7a]">Page 1<svg class="ml-[12px]" width="10" height="10" viewBox="0 0 10 10"><path d="M1 1L9 9M9 1L1 9" stroke="#bdbdbd" stroke-width="2"/></svg></div>
                <svg class="ml-auto mr-[8px] mt-[17px]" width="11" height="6" viewBox="0 0 11 6"><path d="M0 0H11L5.500 6Z" fill="#6e6e6e"/></svg>
            </div>
            <div class="h-[21px] flex bg-white shrink-0">
                <div class="w-[22px]"></div>
                <svg class="flex-1" height="21" viewBox="0 0 827 21" font-family="Liberation Sans" font-size="13" fill="#333">
                    <defs><pattern id="hticks" patternUnits="userSpaceOnUse" width="132.200" height="21"><path d="M0.500 0V21M13.700 16V21M26.900 16V21M40.200 16V21M53.400 16V21M66.600 9V21M79.800 16V21M93 16V21M106.300 16V21M119.500 16V21" stroke="#a0a0a0" fill="none"/></pattern></defs>
                    <rect width="827" height="21" fill="url(#hticks)"/>
                    <rect y="19" width="827" height="2" fill="#c8c8c8"/>
                    <text x="2" y="13.500">0</text><text x="134" y="13.500">100</text><text x="266.500" y="13.500">200</text><text x="398.500" y="13.500">300</text><text x="530.500" y="13.500">400</text><text x="663" y="13.500">500</text><text x="795" y="13.500">600</text>
                </svg>
            </div>
            <div class="flex-1 flex min-h-0">
                <svg class="w-[21px] shrink-0 border-r border-[#c8c8c8]" height="749" viewBox="0 0 20 749" font-family="Liberation Sans" font-size="13" fill="#333">
                    <defs><pattern id="vticks" patternUnits="userSpaceOnUse" width="21" height="132.200"><path d="M0 0.500H21M15 13.700H21M15 26.900H21M15 40.200H21M15 53.400H21M9 66.600H21M15 79.800H21M15 93H21M15 106.300H21M15 119.500H21" stroke="#a0a0a0" fill="none"/></pattern></defs>
                    <rect width="20" height="749" fill="url(#vticks)"/>
                    <text transform="translate(12.500 11) rotate(-90)" text-anchor="middle">0</text>
                    <text transform="translate(12.500 150) rotate(-90)" text-anchor="middle">100</text>
                    <text transform="translate(12.500 282) rotate(-90)" text-anchor="middle">200</text>
                    <text transform="translate(12.500 414) rotate(-90)" text-anchor="middle">300</text>
                    <text transform="translate(12.500 546) rotate(-90)" text-anchor="middle">400</text>
                    <text transform="translate(12.500 678) rotate(-90)" text-anchor="middle">500</text>
                </svg>
                <div class="flex-1 flex flex-col min-w-0">
                    <div class="flex-1 flex min-h-0">
                        <!-- canvas -->
                        <div class="flex-1 bg-white pl-[150px] pt-[154px] text-[17px] text-[#a8a8a8]">
                            <div class="w-[418px] h-[53px] border-2 border-[#999] p-[9px]"><div class="h-[33px] border-2 border-t-[#9a9a9a] border-x-[#e4e4e4] border-b-[#e4e4e4] flex items-center pl-[2px] whitespace-nowrap">邮箱|手机</div></div>
                            <div class="mt-[47px] w-[418px] h-[53px] border-2 border-[#999] p-[9px]"><div class="h-[33px] border-2 border-t-[#9a9a9a] border-x-[#e4e4e4] border-b-[#e4e4e4] pl-[1px] leading-[29px] whitespace-nowrap">用户名<span class="pl-[5px] text-[12px]">，</span>4~16个字符<span class="pl-[5px] text-[12px]">，</span>字母/中文/数字/下划线</div></div>
                            <div class="mt-[47px] w-[418px] h-[53px] border-2 border-[#999] p-[9px]"><div class="h-[33px] border-2 border-t-[#9a9a9a] border-x-[#e4e4e4] border-b-[#e4e4e4] flex items-center pl-[2px] whitespace-nowrap">设置密码</div></div>
                            <div class="mt-[47px] w-[418px] h-[53px] border-2 border-[#999] p-[9px]"><div class="h-[33px] border-2 border-t-[#9a9a9a] border-x-[#e4e4e4] border-b-[#e4e4e4] flex items-center pl-[2px] whitespace-nowrap">确认密码</div></div>
                        </div>
                        <div class="w-[22px] bg-[#e8e8e8] flex flex-col items-center">
                            <svg class="mt-[7px]" width="9" height="6" viewBox="0 0 9 6"><path d="M0 6H9L4.500 0Z" fill="#777"/></svg>
                            <div class="mt-[10px] w-[19px] h-[17px] rounded-[2px] border border-[#a6a6a6] bg-[#ececec]"></div>
                            <svg class="mt-auto mb-[10px]" width="9" height="6" viewBox="0 0 9 6"><path d="M0 0H9L4.500 6Z" fill="#777"/></svg>
                        </div>
                    </div>
                    <div class="h-[22px] flex items-center bg-[#e8e8e8] shrink-0">
                        <svg class="ml-[8px]" width="6" height="9" viewBox="0 0 6 9"><path d="M6 0V9L0 4.500Z" fill="#777"/></svg>
                        <div class="ml-[9px] w-[22px] h-[18px] rounded-[2px] border border-[#a6a6a6] bg-[#ececec]"></div>
                        <svg class="ml-auto mr-[32px]" width="6" height="9" viewBox="0 0 6 9"><path d="M0 0V9L6 4.500Z" fill="#777"/></svg>
                    </div>
                </div>
            </div>
        </div>

        <!-- right column -->
        <div class="flex-1 bg-[#f3f3f3] flex flex-col min-w-0">
            <div class="h-[34px] bg-[#d6d6d6] border-t border-[#c6c6c6] flex items-center text-[14px] shrink-0">
                <svg class="ml-[14px]" width="11" height="11" viewBox="0 0 11 11"><path d="M10 10L2 2M1 7V1H7" fill="none" stroke="#b0b0b0" stroke-width="2.200"/></svg>
                <span class="ml-[116px] pt-px whitespace-nowrap">检查器: 页面</span>
            </div>
            <div class="h-[35px] flex text-[14px] bg-[#c9c9c9] gap-[2px] shrink-0">
                <div class="w-[120px] bg-[#1a9dd9] text-[#e8f6fc] flex items-center justify-center pt-[3px]">PROPERTIES</div>
                <div class="w-[117px] bg-[#d6d6d6] text-[#222] flex items-center justify-center pt-[3px]">NOTES</div>
                <div class="flex-1 bg-[#d6d6d6] text-[#222] flex items-center justify-center pt-[3px]">STYLE</div>
            </div>
            <div class="h-[236px] border-b-2 border-[#e2e2e2] text-[14px] shrink-0">
                <div class="mt-[15px] h-[20px] flex items-center"><svg class="ml-[13px]" width="11" height="8" viewBox="0 0 11 8"><path d="M1 1L5.500 6L10 1" fill="none" stroke="#777" stroke-width="2"/></svg><span class="ml-[9px]">交互</span></div>
                <div class="mt-[13px] h-[20px] flex items-center"><svg class="ml-[16px]" width="14" height="13" viewBox="0 0 14 13"><path d="M7 0V13M0 6.500H14" stroke="#79b829" stroke-width="4"/></svg><span class="ml-[10px] text-[16px] text-[#1a9dd9] underline underline-offset-2">Add Case</span></div>
                <div class="mt-[15px] h-[28px] flex items-center pl-[40px]"><svg width="16" height="17" viewBox="0 0 16 17"><path d="M0 0H16V5H14V3H5V6H0Z" fill="#79b829"/><path d="M6 3L15 11H11L13 16L10.500 17L8.500 12L6 14Z" fill="#6d6d6d"/></svg><span class="ml-[13px] whitespace-nowrap">页面载入时</span></div>
                <div class="h-[27px] flex items-center pl-[40px]"><svg width="16" height="17" viewBox="0 0 16 17"><path d="M0 0H16V5H14V3H5V6H0Z" fill="#79b829"/><path d="M6 3L15 11H11L13 16L10.500 17L8.500 12L6 14Z" fill="#6d6d6d"/></svg><span class="ml-[13px] whitespace-nowrap">窗口改变大小时</span></div>
                <div class="h-[28px] flex items-center pl-[40px]"><svg width="16" height="17" viewBox="0 0 16 17"><path d="M0 0H16V5H14V3H5V6H0Z" fill="#79b829"/><path d="M6 3L15 11H11L13 16L10.500 17L8.500 12L6 14Z" fill="#6d6d6d"/></svg><span class="ml-[13px] whitespace-nowrap">窗口滚动时</span></div>
                <div class="mt-[21px] ml-[13px] w-[333px] h-[28px] border-2 border-[#c9c9c9] flex items-center pl-[9px] text-[15.500px] text-[#222]">更多事件<svg class="ml-auto mr-[3px]" width="10" height="6" viewBox="0 0 10 6"><path d="M0 0H10L5 6Z" fill="#888"/></svg></div>
            </div>
            <div class="mt-[14px] h-[20px] flex items-center text-[13.5px]">
                <span class="ml-[15px]">Adaptive</span>
                <div class="ml-auto w-[17px] h-[17px] border-2 border-[#b3b3b3] bg-linear-to-br from-[#dcdcdc] to-[#f5f5f5]"></div>
                <span class="ml-[6px]">Enabled</span>
                <svg class="ml-[22px] mr-[17px]" width="20" height="13" viewBox="0 0 20 13"><rect x="0" y="5" width="20" height="8" fill="#7d7d7d"/><rect x="4" y="0" width="12" height="9" fill="#1d9bd7"/><rect x="4" y="9" width="3" height="2" fill="#1d9bd7"/><rect x="13" y="9" width="3" height="2" fill="#1d9bd7"/></svg>
            </div>
        </div>
    </div>
</div>
</body>
</html>
